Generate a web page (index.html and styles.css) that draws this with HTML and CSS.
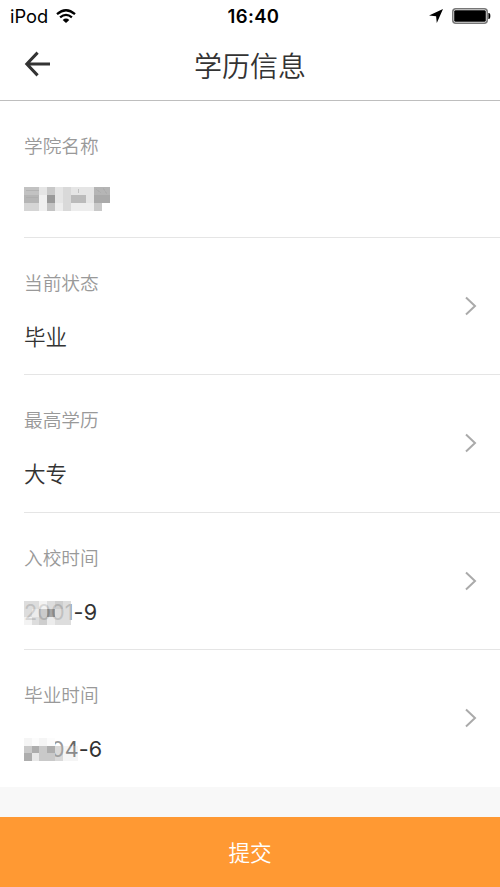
FILE: index.html
```html
<!DOCTYPE html>
<html lang="zh-CN">
<head>
<meta charset="utf-8">
<title>学历信息</title>
<link rel="stylesheet" href="styles.css">
</head>
<body>
<div class="screen">
  <header class="header">
    <div class="status">
      <div class="carrier"><span>iPod</span>
        <svg class="wifi" width="20" height="15" viewBox="0 0 20 15" fill="none" stroke="#000" stroke-width="2.3"><path d="M1 5.1Q10-2.7 19 5.1"/><path d="M4.1 8.4Q10 3.4 15.9 8.4"/><path d="M6.700 11Q10 8.100 13.300 11L10 14Z" fill="#000" stroke="none"/></svg>
      </div>
      <div class="clock">16:40</div>
      <div class="indicators">
        <svg width="14" height="14" viewBox="0 0 14 14"><path d="M14 0 7.800 14 7.100 7.200 0 6.500Z"/></svg>
        <svg width="39" height="16" viewBox="0 0 39 16"><rect x=".8" y=".8" width="34.4" height="14.4" rx="3" fill="#fff" stroke="#777" stroke-width="1.5"/><rect x="2.2" y="2.2" width="31.6" height="11.6" rx="1.4"/><path d="M36.4 5h.8q1.2.6 1.2 3t-1.2 3h-.8z"/></svg>
      </div>
    </div>
    <div class="nav">
      <svg class="back" width="28" height="26" viewBox="0 0 28 26" fill="none" stroke="#333" stroke-width="3"><path d="M13.600 1.600 2.800 13l10.800 11.400M3 13h23"/></svg>
      <h1 class="title">学历信息</h1>
      <span class="nav-end"></span>
    </div>
  </header>
  <main class="list">
    <section class="row">
      <div class="label">学院名称</div>
      <div class="value">
        <svg class="mosaic" width="86" height="24" viewBox="0 0 86 24" shape-rendering="crispEdges"><path fill="#e5e5e5" d="M0 0h86v16H0z"/><path fill="#ededed" d="M0 16h78v8H0z"/><path fill="#c2c2c2" d="M0 0h15v8H0z"/><path fill="#b5b5b5" d="M0 8h15v8H0z"/><path fill="#d5d5d5" d="M0 16h15v8H0z"/><path fill="#c8c8c8" d="M23 0h8v8h-8z"/><path fill="#999" d="M23 8h8v8h-8z"/><path fill="#c3c3c3" d="M23 16h8v8h-8z"/><path fill="#f0f0f0" d="M15 8h8v16h-8z"/><path fill="#d9d9d9" d="M39 0h8v24h-8z"/><path fill="#bbb" d="M47 8h15v8H47z"/><path fill="#b5b5b5" d="M70 0h16v8H70z"/><path fill="#aaa" d="M70 8h16v8H70z"/><path fill="#c9c9c9" d="M70 16h8v8h-8z"/><path stroke="#aaa" opacity=".6" d="M2 3.500h13M2 10.500h12M72 2l5 4m2-5 4 6M54.500 2v4"/></svg>
      </div>
    </section>
    <section class="row">
      <div class="label">当前状态</div><div class="value">毕业</div>
      <svg class="chevron" width="13" height="20" viewBox="0 0 13 20"><path d="m2 1.500 9 8.500-9 8.500"/></svg>
    </section>
    <section class="row">
      <div class="label">最高学历</div><div class="value">大专</div>
      <svg class="chevron" width="13" height="20" viewBox="0 0 13 20"><path d="m2 1.500 9 8.500-9 8.500"/></svg>
    </section>
    <section class="row">
      <div class="label">入校时间</div>
      <div class="value date"><span class="faint">200</span><span class="mid">1</span>-9
        <svg class="mosaic over" width="50" height="24" viewBox="0 0 50 24" shape-rendering="crispEdges"><g opacity=".65"><path fill="#ccc" d="M0 0h47v24H0z"/><path fill="#eee" d="M15 0h8v8h-8zM0 16h8v8H0z"/><path fill="#b0b0b0" d="M15 8h8v8h-8z"/><path fill="#777" d="M23 8h8v8h-8z"/><path fill="#e3e3e3" d="M8 8h7v8H8zM23 16h8v8h-8z"/><path fill="#b5b5b5" d="M15 16h8v8h-8zM31 0h8v8h-8z"/></g></svg>
      </div>
      <svg class="chevron" width="13" height="20" viewBox="0 0 13 20"><path d="m2 1.500 9 8.500-9 8.500"/></svg>
    </section>
    <section class="row">
      <div class="label">毕业时间</div>
      <div class="value date"><span class="faint">20</span><span class="mid">0</span><span class="dim">4</span>-6
        <svg class="mosaic over" width="54" height="24" viewBox="0 0 54 24" shape-rendering="crispEdges"><path fill="#f5f5f5" d="M0 0h8v8H0zM15 0h8v8h-8z"/><path fill="#fcfcfc" d="M8 0h7v8H8zM23 0h8v8h-8z"/><path fill="#c9c9c9" d="M0 8h31v15H0z"/><path fill="#adadad" d="M8 8h7v7H8zM0 15h8v8H0zM23 8h8v7h-8z"/><path fill="#e8e8e8" d="M8 15h7v8H8z"/><path fill="#aaa" opacity=".45" d="M31 8h8v15h-8z"/><path fill="#ddd" opacity=".3" d="M39 8h15v15H39z"/></svg>
      </div>
      <svg class="chevron" width="13" height="20" viewBox="0 0 13 20"><path d="m2 1.500 9 8.500-9 8.500"/></svg>
    </section>
  </main>
  <button class="submit">提交</button>
</div>
</body>
</html>
```
FILE: styles.css
```css
* { box-sizing: border-box; }
body { margin: 0; background: #f8f8f8; font-family: Inter, "Noto Sans CJK SC", sans-serif; color: #333; }
.screen { display: flex; flex-direction: column; height: 887px; }
.header { height: 101px; background: #fff; border-bottom: 1px solid #bebebe; }
.status { display: grid; grid-template-columns: 1fr auto 1fr; align-items: center; height: 32px; padding: 0 9px 0 10px; color: #000; }
.carrier { display: flex; align-items: center; gap: 8px; font-size: 18.3px; }
.clock { font-size: 18.5px; font-weight: 600; letter-spacing: .35px; padding-left: 6px; }
.indicators { display: flex; justify-content: flex-end; align-items: center; gap: 9px; }
.nav { display: grid; grid-template-columns: 28px 1fr 28px; align-items: center; height: 68px; padding: 0 24px; }
.back { margin-top: -4px; }
.title { margin: 0; padding-top: 1px; font-size: 28px; font-weight: 350; line-height: 40px; text-align: center; }
.list { height: 686px; background: #fff; }
.row { display: grid; grid-template-columns: 1fr 13px; grid-template-rows: 28px 30px; row-gap: 24px; height: 137.5px; margin-left: 24px; padding: 32px 23px 0 0; border-bottom: 1px solid #e5e5e5; }
.row:first-child { height: 136.5px; }
.row:last-child { border-bottom: 0; }
.label { grid-column: 1; font-size: 18.7px; line-height: 28px; color: #999; font-weight: 350; }
.value { position: relative; grid-column: 1; grid-row: 2; font-size: 21.6px; font-weight: 350; line-height: 30px; white-space: nowrap; }
.date { font-weight: 400; letter-spacing: .1px; }
.chevron { grid-column: 2; grid-row: 1 / 3; align-self: center; margin-top: -10px; fill: none; stroke: #aaa; stroke-width: 2; }
.mosaic { display: block; margin-top: 2px; }
.over { position: absolute; left: 0; top: 2px; }
.faint { color: #aaa; }
.mid { color: #999; }
.dim { color: #666; }
.submit { height: 70px; margin-top: auto; padding: 0; border: 0; background: #ff9933; color: #fff; font: 350 21.6px/70px "Noto Sans CJK SC", sans-serif; }
```
